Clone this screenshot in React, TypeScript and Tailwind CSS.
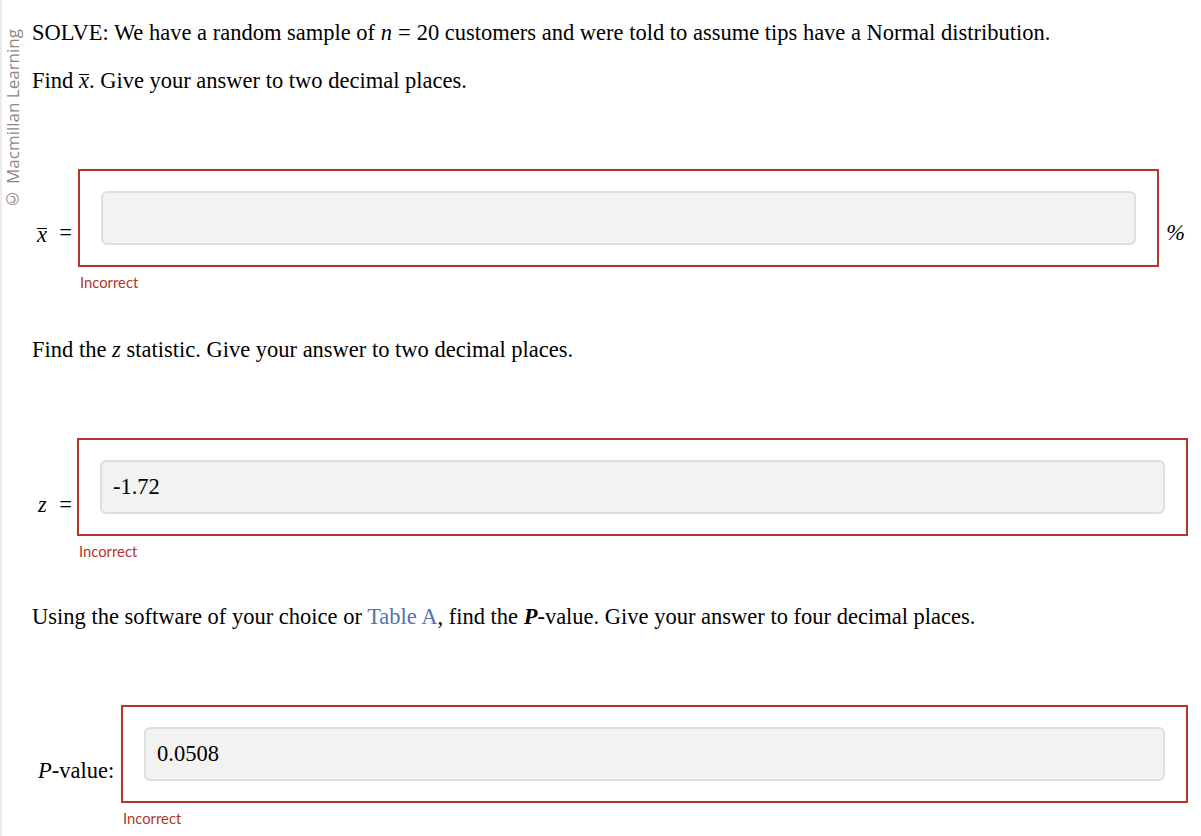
export default function App() {
  const serif = "font-['Liberation_Serif',serif]";
  const box = "flex-1 border-2 border-[#b5352a] py-[20px] px-[21px]";
  const input =
    "h-[54px] rounded-[6px] border-2 border-[#dedede] bg-[#f2f2f2] px-[11px] flex items-center text-[22.5px] text-black";
  const incorrect =
    "font-['Lato',sans-serif] text-[14.8px] leading-4 text-[#b5352a]";

  return (
    <div className={`flex min-h-screen bg-white ${serif}`}>
      <div className="w-[2px] bg-[#ececec]" />
      {/* watermark */}
      <div className="w-[30px]">
        <div className="mt-[29px] ml-[1px] rotate-180 [writing-mode:vertical-rl] font-['Open_Sans',sans-serif] text-[17px] leading-[20px] text-[#888888] whitespace-nowrap">
          © Macmillan Learning
        </div>
      </div>

      <main className="flex-1 pr-[13px] text-[22.5px] leading-6 text-black">
        <p className="mt-[21px]">
          SOLVE: We have a random sample of <i>n</i>
          <span className="mx-[6px]">=</span>20 customers and were told to
          assume tips have a Normal distribution.
        </p>
        <p className="mt-[24px]">
          Find{" "}
          <i className="inline-block border-t border-black leading-[11px]">x</i>
          . Give your answer to two decimal places.
        </p>

        {/* x bar */}
        <div className="mt-[76px] flex items-end">
          <span className="mb-[22px] flex w-[46px] justify-between pl-[5px] pr-[6px]">
            <i className="inline-block self-end border-t border-black leading-[11px] mb-[5px]">
              x
            </i>
            <span>=</span>
          </span>
          <div className={box}>
            <div className={input} />
          </div>
          <span className="mb-[22px] ml-[7px] mr-[3px] italic">%</span>
        </div>
        <div className={`mt-[7px] ml-[48px] ${incorrect}`}>Incorrect</div>

        <p className="mt-[48px]">
          Find the <i>z</i> statistic. Give your answer to two decimal places.
        </p>

        {/* z */}
        <div className="mt-[76px] flex items-end">
          <span className="mb-[19px] flex w-[45px] justify-between pl-[6px] pr-[5px]">
            <i>z</i>
            <span>=</span>
          </span>
          <div className={box}>
            <div className={input}>-1.72</div>
          </div>
        </div>
        <div className={`mt-[7px] ml-[47px] ${incorrect}`}>Incorrect</div>

        <p className="mt-[46px]">
          Using the software of your choice or{" "}
          <span className="text-[#4f74b3]">Table A</span>, find the{" "}
          <b>
            <i>P</i>
          </b>
          -value. Give your answer to four decimal places.
        </p>

        {/* P-value */}
        <div className="mt-[76px] flex items-end">
          <span className="mb-[20px] w-[89px] pl-[6px] whitespace-nowrap">
            <i>P</i>-value:
          </span>
          <div className={box}>
            <div className={input}>0.0508</div>
          </div>
        </div>
        <div className={`mt-[7px] ml-[91px] ${incorrect}`}>Incorrect</div>
      </main>
    </div>
  );
}
